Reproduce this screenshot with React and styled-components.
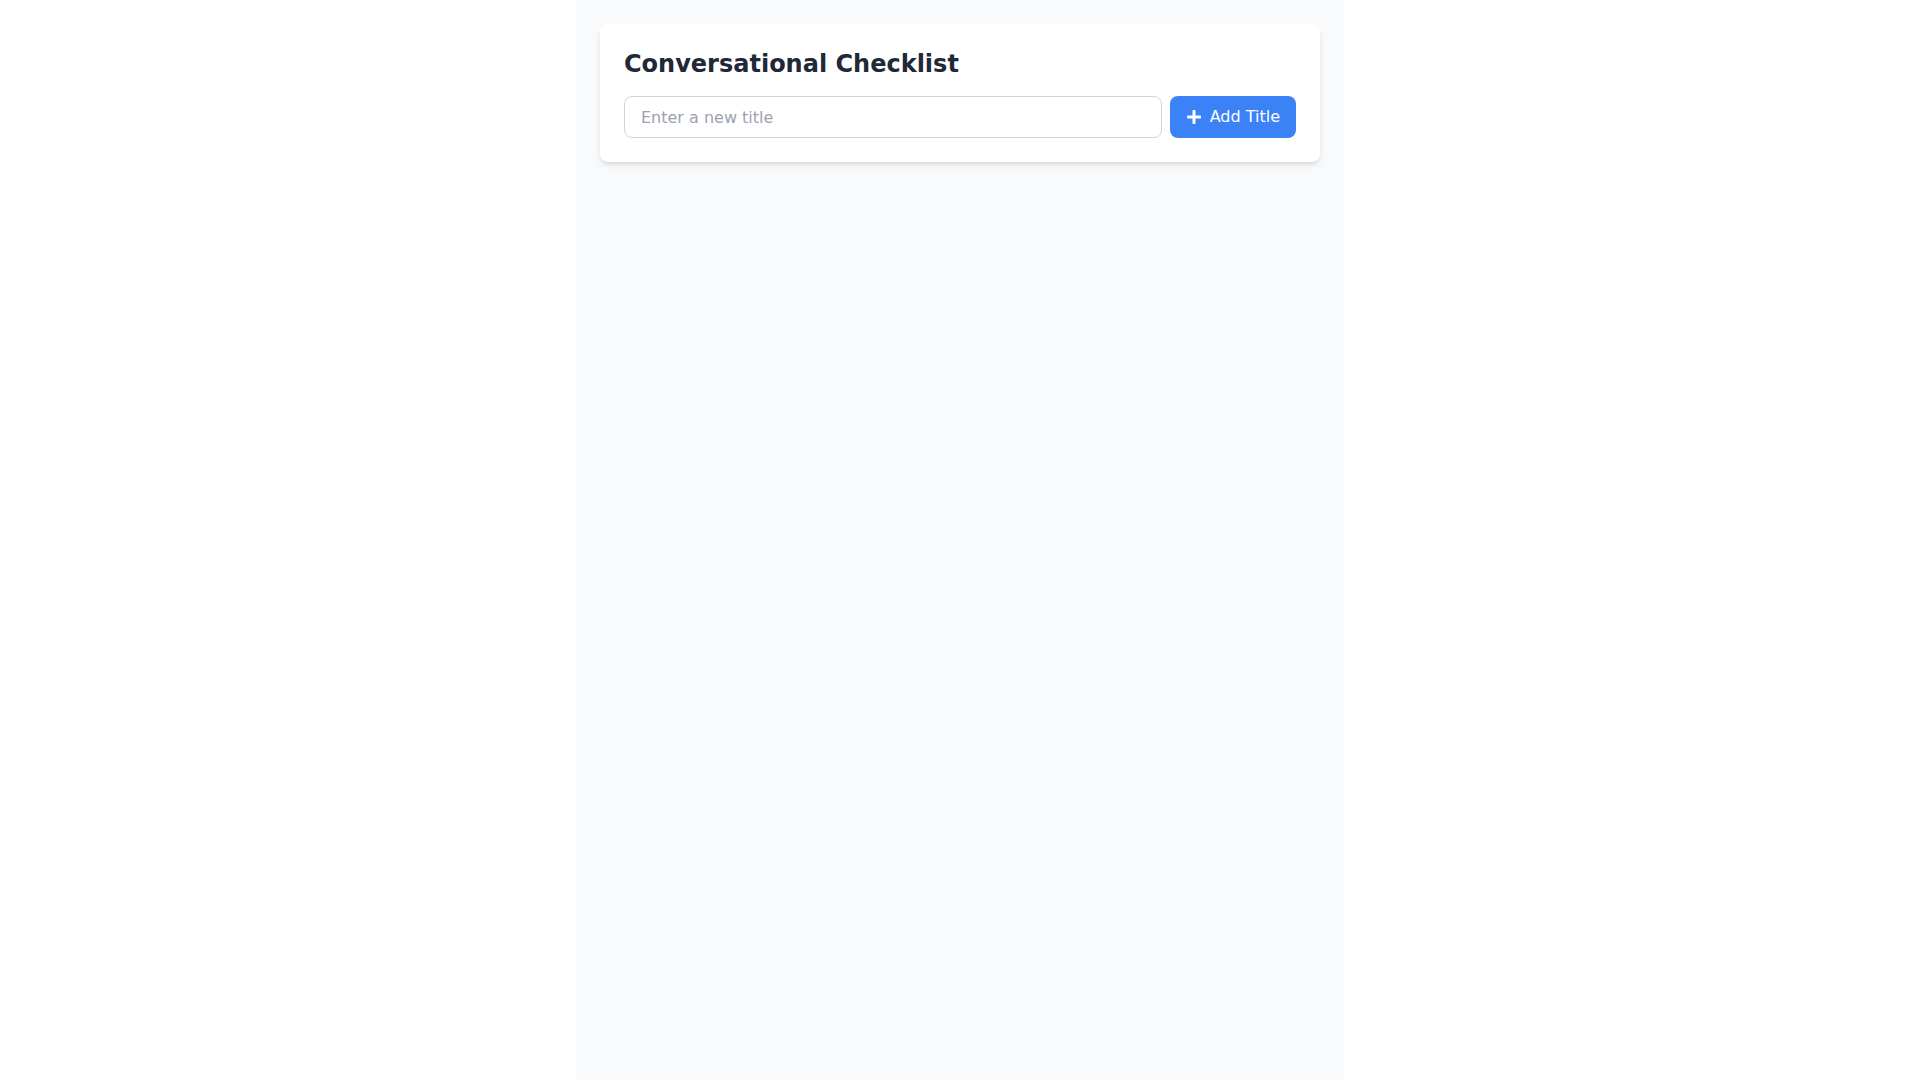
import React from "react";
import styled, { createGlobalStyle } from "styled-components";
import { FaPlus } from "react-icons/fa";

const GlobalStyle = createGlobalStyle`
  * {
    box-sizing: border-box;
  }

  body {
    margin: 0;
    background: #ffffff;
    font-family: "DejaVu Sans", "Noto Sans", sans-serif;
    color: #1f2937;
  }
`;

const App = () => {
  return (
    <>
      <GlobalStyle />
      <Panel>
        <Card>
          <Title>Conversational Checklist</Title>
          <FormRow>
            <TitleInput type="text" placeholder="Enter a new title" />
            <AddButton type="button">
              <FaPlus />
              Add Title
            </AddButton>
          </FormRow>
        </Card>
      </Panel>
    </>
  );
};

const Panel = styled.div`
  max-width: 768px;
  min-height: 100vh;
  margin: 0 auto;
  padding: 24px;
  background: #f9fafb;
`;

const Card = styled.div`
  background: #ffffff;
  border-radius: 8px;
  padding: 24px;
  box-shadow: 0 4px 6px -1px rgba(0, 0, 0, 0.1),
    0 2px 4px -2px rgba(0, 0, 0, 0.1);
`;

const Title = styled.h1`
  margin: 0 0 16px;
  font-size: 24px;
  line-height: 32px;
  font-weight: 700;
  color: #1f2937;
`;

const FormRow = styled.div`
  display: flex;
  gap: 8px;
`;

const TitleInput = styled.input`
  flex: 1;
  min-width: 0;
  height: 42px;
  padding: 8px 16px;
  border: 1px solid #d1d5db;
  border-radius: 8px;
  font-family: inherit;
  font-size: 16px;
  line-height: 24px;
  color: #1f2937;
  outline: none;

  &::placeholder {
    color: #9ca3af;
  }
`;

const AddButton = styled.button`
  display: flex;
  align-items: center;
  gap: 8px;
  height: 42px;
  padding: 8px 16px;
  border: none;
  border-radius: 8px;
  background: #3b82f6;
  color: #ffffff;
  font-family: inherit;
  font-size: 16px;
  line-height: 24px;
  cursor: pointer;

  svg {
    flex-shrink: 0;
    width: 16px;
    height: 16px;
  }
`;

export default App;
